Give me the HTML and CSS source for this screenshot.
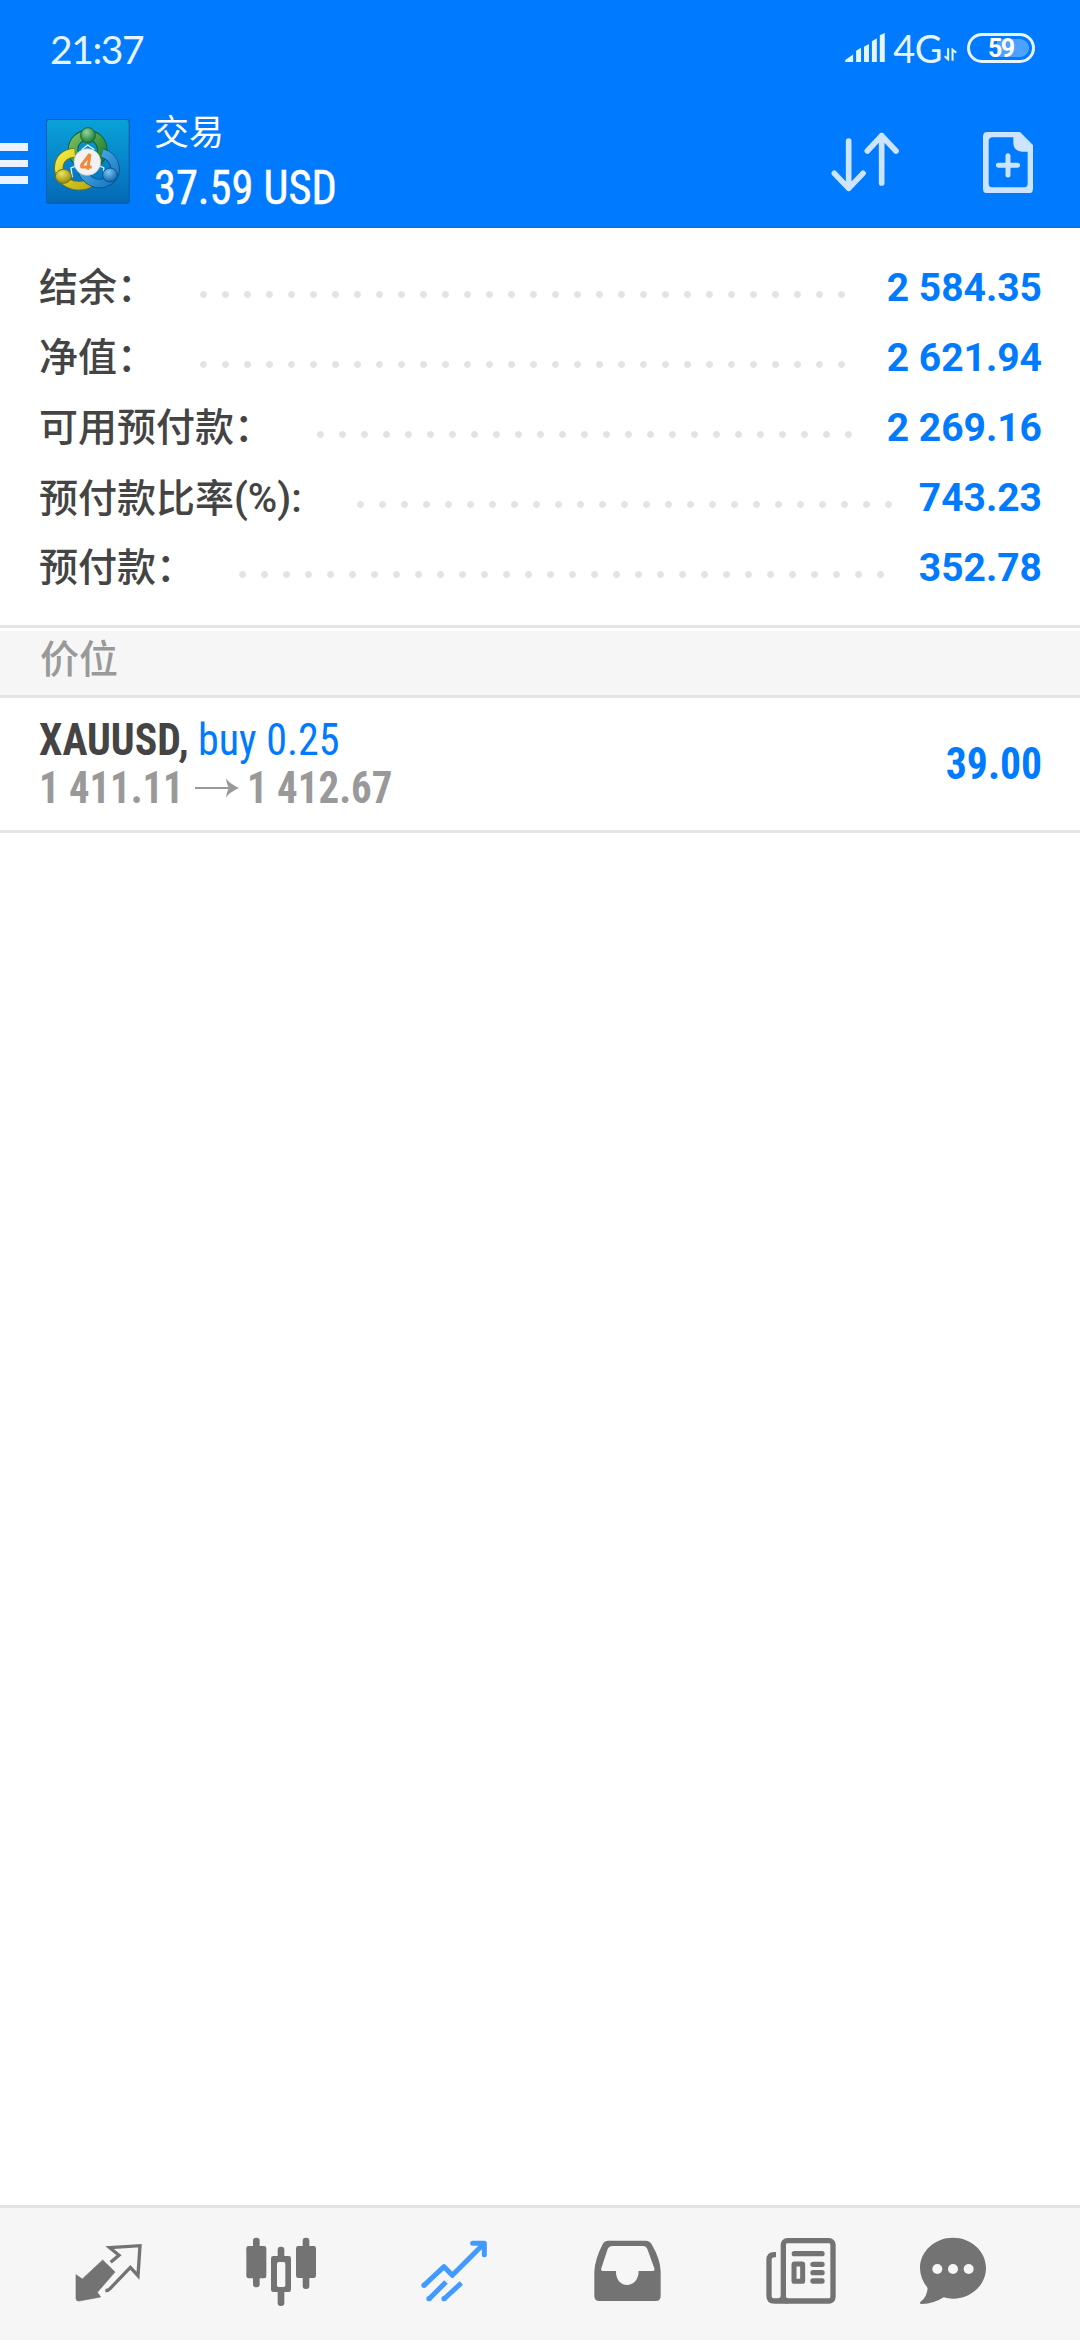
FILE: index.html
```html
<!DOCTYPE html>
<html lang="zh-CN">
<head>
<meta charset="utf-8">
<title>交易</title>
<link rel="stylesheet" href="styles.css">
</head>
<body>
<div class="screen">
  <header class="header">
    <div class="status">
      <span class="clock">21:37</span>
      <div class="indicators">
        <svg class="signal" viewBox="192 98 120 88"><path d="M192 186v-6l24-17v23zM225 186v-34l15-9v43zM249 186v-46l15-9v55zM273 186v-63l15-9v72zM297 186v-81l15-7v88z"/></svg>
        <span class="network">4G</span>
        <svg class="updown" viewBox="492 146 38 38"><path d="M504 147v32l-10-9M517 183v-32l11 9"/></svg>
        <span class="battery"><span class="level">59</span></span>
      </div>
    </div>
    <div class="bar">
      <div class="burger"><i></i><i></i><i></i></div>
      <svg class="logo" viewBox="49 45 252 255">
        <defs>
          <linearGradient id="sky" x1="0" y1="0" x2="0" y2="1"><stop offset="0" stop-color="#0aa2d8"/><stop offset=".5" stop-color="#0785cb"/><stop offset="1" stop-color="#0568b4"/></linearGradient>
          <linearGradient id="green" x1="0" y1="0" x2="1" y2="1"><stop offset="0" stop-color="#76bd62"/><stop offset="1" stop-color="#167a2c"/></linearGradient>
          <linearGradient id="gold" x1="0" y1="0" x2="1" y2="1"><stop offset="0" stop-color="#f4ea3d"/><stop offset="1" stop-color="#b9ac12"/></linearGradient>
          <linearGradient id="blue" x1="0" y1="0" x2="1" y2="1"><stop offset="0" stop-color="#58b5e8"/><stop offset="1" stop-color="#1676bf"/></linearGradient>
          <radialGradient id="greenBall" cx=".4" cy=".3" r=".7"><stop offset="0" stop-color="#93d69a"/><stop offset="1" stop-color="#1b7938"/></radialGradient>
          <radialGradient id="goldBall" cx=".4" cy=".3" r=".7"><stop offset="0" stop-color="#eee45c"/><stop offset="1" stop-color="#948b10"/></radialGradient>
          <radialGradient id="blueBall" cx=".4" cy=".3" r=".7"><stop offset="0" stop-color="#7cc6f0"/><stop offset="1" stop-color="#0f66ac"/></radialGradient>
        </defs>
        <rect x="50" y="46" width="249" height="252" rx="9" fill="url(#sky)" stroke="#0560b0" stroke-width="4"/>
        <circle cx="174" cy="137" r="44" fill="none" stroke="#0d5a2a" stroke-width="31"/>
        <circle cx="174" cy="137" r="44" fill="none" stroke="url(#green)" stroke-width="26"/>
        <path d="M135 146c-55 6-59 58-30 84 22 18 53 20 79 6" fill="none" stroke="#776f0b" stroke-width="28"/>
        <path d="M135 146c-55 6-59 58-30 84 22 18 53 20 79 6" fill="none" stroke="url(#gold)" stroke-width="23"/>
        <path d="M218 147c42 13 53 65 17 85-32 18-63-1-77-29" fill="none" stroke="#07518d" stroke-width="28"/>
        <path d="M218 147c42 13 53 65 17 85-32 18-63-1-77-29" fill="none" stroke="url(#blue)" stroke-width="23"/>
        <path d="M156 137l18-14 20 14M128 220l-4-28 20-8M224 219l-2-28-20-8" fill="none" stroke="#e9f2df" stroke-width="4"/>
        <ellipse cx="175" cy="94" rx="22" ry="23" fill="url(#greenBall)" stroke="#14652c" stroke-width="3"/>
        <ellipse cx="101" cy="217" rx="24" ry="21" fill="url(#goldBall)" stroke="#776f0b" stroke-width="3"/>
        <ellipse cx="241" cy="213" rx="22" ry="21" fill="url(#blueBall)" stroke="#095391" stroke-width="3"/>
        <circle cx="173" cy="174" r="40" fill="#f2f2f4" stroke="#c3c9cc" stroke-width="2"/>
        <path d="M181 150l-25 33v6h30M181 150l-7 47" fill="none" stroke="#f0893a" stroke-width="9" stroke-linejoin="round"/>
      </svg>
      <div class="titles">
        <span class="title">交易</span>
        <span class="profit cond">37.59 USD</span>
      </div>
      <svg class="sort" viewBox="153 394 204 182"><path d="M206 421v142M163 518l43 45 43-45M305 547v-142M262 451l43-46 43 46"/></svg>
      <svg class="new-order" viewBox="609 394 150 184"><path fill-rule="evenodd" d="M622 394h98l39 39v132q0 13-13 13h-124q-13 0-13-13v-158q0-13 13-13zM638 410q-12 0-12 12v127q0 11 12 11h93q12 0 12-11v-96h-17q-25-2-26-26v-17z"/><path class="plus" d="M684 465v58M655 494h58"/></svg>
    </div>
  </header>

  <section class="summary">
    <div class="line"><span class="label">结余：</span><i class="dots"></i><b class="value">2 584.35</b></div>
    <div class="line"><span class="label">净值：</span><i class="dots"></i><b class="value">2 621.94</b></div>
    <div class="line"><span class="label">可用预付款：</span><i class="dots"></i><b class="value">2 269.16</b></div>
    <div class="line"><span class="label ratio">预付款比率<span class="latin">(%):</span></span><i class="dots"></i><b class="value">743.23</b></div>
    <div class="line"><span class="label">预付款：</span><i class="dots"></i><b class="value">352.78</b></div>
  </section>

  <h2 class="section-title">价位</h2>

  <article class="position">
    <div class="deal">
      <div class="deal-head"><b class="symbol cond">XAUUSD,</b><span class="side cond">buy 0.25</span></div>
      <div class="prices"><b class="cond open">1 411.11</b><svg class="arrow" viewBox="585 502 132 60"><path d="M585 532h105" stroke="#999" stroke-width="6"/><path d="M678 503q10 16 39 29-29 13-39 29 4-29 12-29-8 0-12-29z" fill="#999"/></svg><b class="cond current">1 412.67</b></div>
    </div>
    <b class="gain cond">39.00</b>
  </article>

  <main class="space"></main>

  <nav class="tabs">
    <svg viewBox="0 54 540 396"><path d="M308 210l37 36-53 61 10 14-65 12q-9 1-9-8v-71l19 13z" fill="#737373" stroke="#737373" stroke-width="2" stroke-linejoin="round"/><path d="M332 217l25-21-28-23 91-6-6 90-23-25-60 63q-6 7-15 7" fill="none" stroke="#737373" stroke-width="10"/></svg>
    <svg viewBox="540 54 540 396"><g fill="#737373"><rect x="759" y="143" width="20" height="149" rx="9"/><rect x="739" y="168" width="60" height="97" rx="7"/><rect x="908" y="143" width="20" height="154" rx="9"/><rect x="888" y="168" width="60" height="96" rx="7"/><rect x="833" y="170" width="20" height="178" rx="9"/><rect x="813" y="198" width="60" height="108" rx="7"/></g><rect x="831" y="216" width="25" height="75" rx="5" fill="#f6f6f6"/></svg>
    <svg viewBox="0 54 540 396"><path d="M192 286l60-56 25 26 90-90M207 327l51-51M252 327l52-48" fill="none" stroke="#419aff" stroke-width="15" stroke-linejoin="round"/><circle cx="192" cy="286" r="8" fill="#419aff"/><circle cx="207" cy="326" r="8" fill="#419aff"/><circle cx="252" cy="326" r="8" fill="#419aff"/><path d="M338 160h35v34" fill="none" stroke="#419aff" stroke-width="15" stroke-linecap="round" stroke-linejoin="round"/></svg>
    <svg viewBox="540 54 540 396"><path fill="#737373" fill-rule="evenodd" d="M745 152h112q12 0 18 11 26 45 27 81v74q0 15-15 15h-169q-15 0-15-15v-74q2-37 25-81 5-11 17-11zM758 168q-11 0-15 9l-19 58q-2 8 5 8h39c-2 56 68 56 68 0h42q7 0 5-8l-21-58q-4-9-13-9z"/></svg>
    <svg viewBox="0 54 540 396"><g fill="none" stroke="#737373" stroke-width="16"><rect x="190" y="152" width="149" height="181" rx="12"/><path d="M168 194h-5q-16 0-16 16v107q0 16 16 16h40"/></g><path d="M184 320v9h-15M184 329l-8-3 8-8zM196 327v-10q2 8 11 10z" fill="#737373"/><g fill="#737373"><rect x="215" y="183" width="99" height="16" rx="8"/><rect x="271" y="215" width="43" height="16" rx="8"/><rect x="271" y="240" width="43" height="16" rx="8"/><rect x="271" y="265" width="43" height="16" rx="8"/></g><rect x="222" y="222" width="26" height="52" rx="2" fill="none" stroke="#737373" stroke-width="15" stroke-linejoin="round"/></svg>
    <svg viewBox="540 54 540 396"><path fill="#737373" d="M699 143c55 0 99 41 99 91s-44 92-99 92q-15 0-28-4-29 19-65 20-9 0-5-6 20-14 22-42-23-28-23-60c0-50 44-91 99-91z"/><g fill="#f6f6f6"><circle cx="652" cy="237" r="15"/><circle cx="699" cy="237" r="15"/><circle cx="746" cy="237" r="15"/></g></svg>
  </nav>
</div>
</body>
</html>
```
FILE: styles.css
```css
* { box-sizing: border-box; }
body { margin: 0; background: #fff; }
svg { display: block; flex: none; }

.screen {
  width: 1080px;
  height: 2340px;
  display: flex;
  flex-direction: column;
  font-family: Roboto, "Noto Sans CJK SC", sans-serif;
  color: #444;
}

.cond {
  display: inline-block;
  font-family: Roboto, sans-serif;
  font-stretch: 75%;
  white-space: nowrap;
  line-height: 48px;
  transform-origin: left center;
}

/* Header */
.header {
  height: 228px;
  flex: none;
  background: #007aff;
  border-bottom: 2px solid #0872e6;
  color: #fff;
}
.status {
  height: 100px;
  display: flex;
  justify-content: space-between;
  padding: 0 45px 0 50px;
  font-family: Lato, sans-serif;
  color: #e6f4ff;
}
.clock { font-size: 39px; line-height: 46px; padding-top: 26px; letter-spacing: -1.4px; }
.indicators { display: flex; height: 63px; align-items: flex-end; }
.signal { width: 40px; height: 29px; fill: #e6f4ff; margin-bottom: 1px; }
.network { font-size: 38px; line-height: 44px; margin: 0 2px 0 8px; height: 37px; letter-spacing: -.5px; }
.updown { width: 13px; height: 13px; fill: none; stroke: #e6f4ff; stroke-width: 6; margin: 0 10px 2px 0; }
.battery {
  width: 68px;
  height: 30px;
  border: 3px solid #e6f4ff;
  border-radius: 15px;
  padding: 3px;
}
.level {
  display: block;
  height: 18px;
  border-radius: 9px;
  background: linear-gradient(90deg, transparent 42%, #4da2ff 42%);
  font: 700 25px/20px Roboto, sans-serif;
  padding-left: 15px;
  letter-spacing: -1.5px;
  color: #fff;
}

.bar { display: flex; height: 126px; align-items: flex-start; }
.burger { width: 28px; margin-top: 43px; display: flex; flex-direction: column; gap: 9px; }
.burger i { height: 7.6px; background: #eaf4ff; }
.logo { width: 84px; height: 85px; margin: 19px 0 0 18px; }
.titles { margin-left: 24px; padding-top: 6px; display: flex; flex-direction: column; width: 300px; }
.title { font: 400 35px/48px "Noto Sans CJK SC", sans-serif; }
.profit { font-size: 48px; line-height: 56px; margin-top: 6px; transform: scaleX(.925); -webkit-text-stroke: .5px #fff; }
.sort { width: 68px; height: 60.7px; margin: 32px 0 0 377px; fill: none; stroke: #cce4ff; stroke-width: 17; stroke-linecap: round; stroke-linejoin: round; }
.new-order { width: 50px; height: 61.3px; margin: 32px 0 0 84px; fill: #cce4ff; }
.plus { stroke: #cce4ff; stroke-width: 15; stroke-linecap: round; }

/* Account summary */
.summary { height: 400px; flex: none; padding: 24px 38px 0 39px; border-bottom: 3px solid #e5e5e5; }
.line { display: flex; height: 70px; align-items: center; line-height: 70px; font-size: 39px; }
.label { font-family: "Noto Sans CJK SC", sans-serif; font-weight: 500; white-space: nowrap; margin-top: -6px; }
.ratio { margin-top: -1px; padding-right: 11px; }
.latin { font-family: Roboto, sans-serif; font-size: 40px; }
.dots {
  flex: 1;
  height: 7px;
  margin: 15px 29px 0 44px;
  background: radial-gradient(circle at 3.5px 3.5px, #e3e3e3 3px, transparent 3.8px) 0 0 / 22px 7px repeat-x;
}
.ratio + .dots { margin-right: 24px; }
.value { font-weight: 700; color: #007aff; white-space: pre; margin-top: 1px; }

.section-title {
  flex: none;
  height: 67px;
  margin: 3px 0 0;
  padding-left: 40px;
  background: #f6f6f6;
  border-bottom: 3px solid #e5e5e5;
  color: #999;
  font: 500 39px/50px "Noto Sans CJK SC", sans-serif;
}

/* Open position */
.position {
  flex: none;
  height: 135px;
  display: flex;
  justify-content: space-between;
  align-items: center;
  padding: 0 38px 0 39px;
  border-bottom: 3px solid #e5e5e5;
  font-size: 44px;
}
.deal-head, .prices { display: flex; height: 48px; align-items: center; }
.symbol { transform: scaleX(.95); margin-right: -8px; }
.side { color: #007aff; margin-left: 9px; transform: scaleX(.955); }
.prices { color: #999; }
.open { transform: scaleX(.925); margin-right: -12px; }
.current { transform: scaleX(.93); }
.arrow { width: 44px; height: 20px; margin: 0 8px 0 12px; }
.gain { color: #007aff; font-size: 45px; transform: scaleX(.925); transform-origin: right center; }

.space { flex: 1; }

/* Tab bar */
.tabs {
  flex: none;
  height: 135px;
  display: flex;
  background: #f6f6f6;
  border-top: 3px solid #e3e3e3;
}
.tabs svg { width: 180px; height: 132px; }
```
